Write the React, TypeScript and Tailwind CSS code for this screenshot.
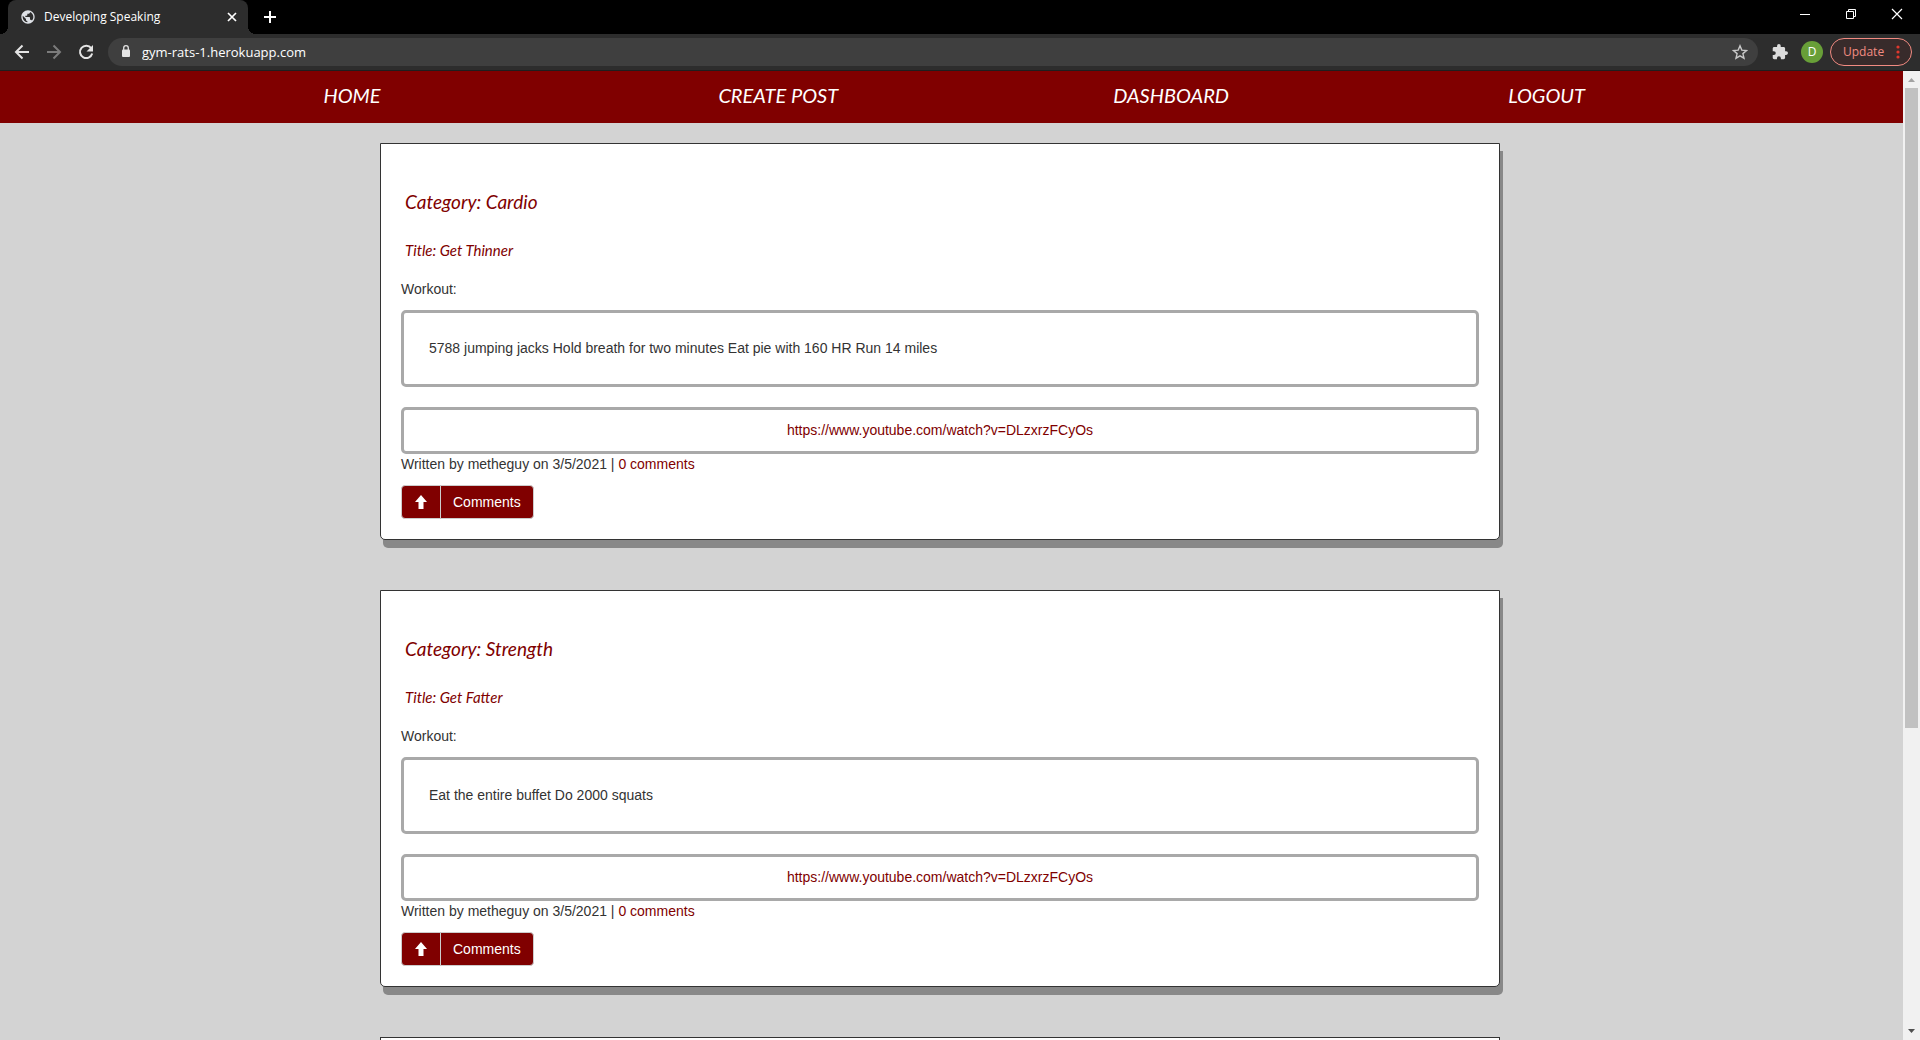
import React from "react";
import { MdPublic } from "react-icons/md";

type Post = { id: number; category: string; title: string; workout: string };

const posts: Post[] = [
  {
    id: 1,
    category: "Cardio",
    title: "Get Thinner",
    workout: "5788 jumping jacks Hold breath for two minutes Eat pie with 160 HR Run 14 miles",
  },
  { id: 2, category: "Strength", title: "Get Fatter", workout: "Eat the entire buffet Do 2000 squats" },
];

const video = "https://www.youtube.com/watch?v=DLzxrzFCyOs";

function TabStrip() {
  return (
    <div className="flex h-[34px] shrink-0 items-stretch bg-black pl-2 text-white">
      <div className="relative flex w-60 items-center rounded-t-lg bg-[#2d2d2d] pr-2 pl-3">
        <span className="absolute bottom-0 -left-2 size-2 bg-[radial-gradient(circle_at_0_0,#000_8px,#2d2d2d_8px)]" />
        <span className="absolute -right-2 bottom-0 size-2 bg-[radial-gradient(circle_at_100%_0,#000_8px,#2d2d2d_8px)]" />
        <MdPublic className="mr-2 size-4 text-[#dee1e6]" aria-hidden="true" />
        <span className="flex-1 truncate text-[12px] leading-4">Developing Speaking</span>
        <button aria-label="Close tab" className="flex size-4 items-center justify-center">
          <svg className="size-4" viewBox="0 0 16 16" fill="none" stroke="#fff" strokeWidth="1.700">
            <path d="M4 4l8 8M12 4l-8 8" />
          </svg>
        </button>
      </div>
      <button aria-label="New tab" className="ml-[14px] flex w-4 items-center justify-center">
        <svg className="size-4" viewBox="0 0 16 16" fill="none" stroke="#fff" strokeWidth="2">
          <path d="M8 2v12M2 8h12" />
        </svg>
      </button>
      <div className="ml-auto flex h-7">
        <button aria-label="Minimize" className="flex w-[46px] items-center justify-center">
          <svg className="size-3" viewBox="0 0 12 12" stroke="#fff">
            <path d="M1 6.500h10" />
          </svg>
        </button>
        <button aria-label="Restore" className="flex w-[46px] items-center justify-center">
          <svg className="size-3" viewBox="0 0 12 12" fill="none" stroke="#fff">
            <path d="M1.500 3.500h7v7h-7zM3.500 3.500v-2h7v7h-2" />
          </svg>
        </button>
        <button aria-label="Close" className="flex w-[46px] items-center justify-center">
          <svg className="size-3" viewBox="0 0 12 12" fill="none" stroke="#fff" strokeWidth="1.200">
            <path d="M1 1l10 10M11 1L1 11" />
          </svg>
        </button>
      </div>
    </div>
  );
}

function Toolbar() {
  return (
    <div className="flex h-[37px] shrink-0 items-center border-b border-[#1f1f1f] bg-[#2d2d2d] pr-2 pl-3 text-white">
      <button aria-label="Back" className="p-[2px]">
        <svg className="size-4" viewBox="0 0 16 16" fill="none" stroke="#e4e4e4" strokeWidth="2">
          <path d="M15 8H2M8.500 1.500L2 8l6.500 6.500" />
        </svg>
      </button>
      <button aria-label="Forward" className="ml-3 p-[2px]">
        <svg className="size-4" viewBox="0 0 16 16" fill="none" stroke="#7b7b7b" strokeWidth="2">
          <path d="M1 8h13M7.500 1.500L14 8l-6.500 6.500" />
        </svg>
      </button>
      <button aria-label="Reload" className="ml-3 p-[2px]">
        <svg className="size-4" viewBox="0 0 16 16" fill="none">
          <path d="M13.200 4.200A6.200 6.200 0 1 0 14.200 9.500" stroke="#e4e4e4" strokeWidth="2" />
          <path d="M15 1v6.500H8.500z" fill="#e4e4e4" />
        </svg>
      </button>
      <div className="ml-3 flex h-7 flex-1 items-center rounded-full bg-[#3f3f3f] pr-[10px] pl-3">
        <svg className="mr-[10px] h-4 w-3" viewBox="0 0 12 16" fill="none" aria-hidden="true">
          <rect x="2" y="5.500" width="8" height="7.500" rx="1" fill="#e4e4e4" />
          <path d="M3.700 6V4a2.300 2.300 0 0 1 4.600 0v2" stroke="#e4e4e4" strokeWidth="1.300" />
        </svg>
        <input
          aria-label="Address"
          defaultValue="gym-rats-1.herokuapp.com"
          className="min-w-0 flex-1 bg-transparent text-[13px] leading-5 outline-none"
        />
        <button aria-label="Bookmark">
          <svg className="size-4" viewBox="0 0 16 16" fill="none" stroke="#c8c8c8" strokeWidth="1.400">
            <path d="M8 1.800l1.800 4.300 4.700.4-3.600 3.100 1.100 4.600L8 11.800l-4 2.400 1.100-4.600L1.500 6.500l4.700-.4z" />
          </svg>
        </button>
      </div>
      <button aria-label="Extensions" className="ml-[14px]">
        <svg className="size-4" viewBox="1 1 22 22" fill="#dcdcdc">
          <path d="M20.500 11H19V7c0-1.100-.9-2-2-2h-4V3.500a2.500 2.500 0 0 0-5 0V5H4c-1.100 0-2 .9-2 2v3.800h1.500a2.700 2.700 0 0 1 0 5.400H2V20c0 1.100.9 2 2 2h3.800v-1.500a2.700 2.700 0 0 1 5.400 0V22H17c1.100 0 2-.9 2-2v-4h1.500a2.500 2.500 0 0 0 0-5z" />
        </svg>
      </button>
      <button
        aria-label="Profile"
        className="ml-[13px] flex size-[22px] items-center justify-center rounded-full bg-[#689f38] text-[12px] leading-4"
      >
        D
      </button>
      <button className="ml-[7px] flex h-7 w-[82px] items-center justify-between rounded-full border border-[#f28b82] bg-[#382b2b] pr-[11px] pl-3 text-[12px] leading-4 text-[#f28b82]">
        Update
        <svg className="h-4 w-1" viewBox="0 0 4 16" fill="#e0382d" aria-hidden="true">
          <circle cx="2" cy="3" r="1.600" />
          <circle cx="2" cy="8" r="1.600" />
          <circle cx="2" cy="13" r="1.600" />
        </svg>
      </button>
    </div>
  );
}

function SiteNav() {
  return (
    <nav className="grid h-[52px] grid-cols-4 bg-[#800000] pt-2 pl-[17%] font-[Lato,sans-serif] text-[20px] leading-8 text-white italic">
      {["HOME", "CREATE POST", "DASHBOARD", "LOGOUT"].map((label) => (
        <div key={label}>
          <a href="#">{label}</a>
        </div>
      ))}
    </nav>
  );
}

function PostCard({ post }: { post: Post }) {
  return (
    <article className="mb-[50px] rounded-b-[5px] border border-[#333] bg-white p-5 shadow-[3px_8px_0_#888]">
      <div className="px-1 font-[Lato,sans-serif] text-[#800000] italic">
        <h2 className="pt-[22px] text-[19px] leading-8">Category: {post.category}</h2>
        <h3 className="mt-5 text-[15px] leading-6">Title: {post.title}</h3>
      </div>
      <p className="mt-[17px]">Workout:</p>
      <p className="mt-[10px] rounded-[5px] border-3 border-[#a9a9a9] p-[25px]">{post.workout}</p>
      <p className="mt-5 rounded-[5px] border-3 border-[#a9a9a9] p-[10px] text-center">
        <a href={video} className="text-[#800000]">
          {video}
        </a>
      </p>
      <p>
        Written by metheguy on 3/5/2021 |{" "}
        <a href="#" className="text-[#800000]">
          0 comments
        </a>
      </p>
      <div className="mt-[10px] flex">
        <button
          aria-label="Upvote"
          className="flex h-[34px] w-10 items-center justify-center rounded-l-[4px] border border-[#ccc] bg-[#800000]"
        >
          <svg className="size-[14px]" viewBox="0 0 14 14" fill="#fff">
            <path d="M7 0l6 7H9.500v7h-5V7H1z" />
          </svg>
        </button>
        <button className="-ml-px h-[34px] rounded-r-[4px] border border-[#ccc] bg-[#800000] px-3 text-white">
          Comments
        </button>
      </div>
    </article>
  );
}

function Scrollbar() {
  return (
    <div className="flex w-[17px] shrink-0 flex-col items-center bg-[#f1f1f1]" aria-hidden="true">
      <svg className="h-[17px] w-[17px] shrink-0" viewBox="0 0 17 17" fill="#a3a3a3">
        <path d="M5 11h7L8.500 7z" />
      </svg>
      <div className="h-[66%] w-[13px] bg-[#c1c1c1]" />
      <svg className="mt-auto h-[17px] w-[17px] shrink-0" viewBox="0 0 17 17" fill="#505050">
        <path d="M5 6h7L8.500 10z" />
      </svg>
    </div>
  );
}

export default function App() {
  return (
    <div className="flex h-screen flex-col overflow-hidden font-['Open_Sans',sans-serif]">
      <TabStrip />
      <Toolbar />
      <div className="flex min-h-0 flex-1">
        <div className="flex-1 overflow-hidden bg-[#d3d3d3] font-['Liberation_Sans',sans-serif] text-[14px] leading-[21px] text-[#333]">
          <SiteNav />
          <main className="mr-[403px] ml-[380px] pt-5">
            {posts.map((post) => (
              <PostCard key={post.id} post={post} />
            ))}
            <article aria-label="Next post" className="border border-[#333] bg-white p-5" />
          </main>
        </div>
        <Scrollbar />
      </div>
    </div>
  );
}
